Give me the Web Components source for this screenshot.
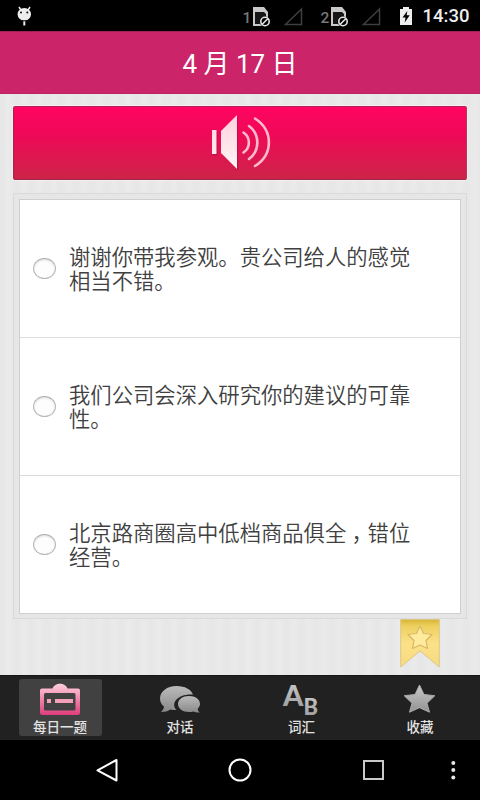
<!DOCTYPE html>
<html lang="zh-CN">
<head>
<meta charset="utf-8">
<title>每日一题</title>
<style>
html,body{margin:0;height:100%;background:#000}
body{font-family:Roboto,"Noto Sans CJK SC",sans-serif;overflow:hidden}
</style>
</head>
<body>
<daily-app></daily-app>
<script>
const define = (name, html) => customElements.define(name, class extends HTMLElement {
  constructor() {
    super();
    const t = document.createElement('template');
    t.innerHTML = html;
    this.attachShadow({mode: 'open'}).append(t.content.cloneNode(true));
  }
});

define('sim-slot', `
<style>
:host{display:flex;align-items:flex-start;width:61px;color:#777;font:500 15.500px/20px Roboto,sans-serif}
span{width:10px;padding-top:2px;height:20px}
svg{display:block}
</style>
<span><slot></slot></span>
<svg width="51" height="22" viewBox="0 0 51 22">
  <path d="M0 1h11l4 5v14H0z" fill="#c9c9c9"/>
  <path d="M2 6h9l2 2v10H2z" fill="#161616"/>
  <circle cx="12" cy="15.500" r="5.300" fill="#000"/>
  <circle cx="12" cy="15.500" r="4.200" fill="none" stroke="#e6e6e6" stroke-width="1.600"/>
  <path d="M9 18.500l6-6" stroke="#e6e6e6" stroke-width="1.600"/>
  <path d="M32.500 18.500h16V3z" fill="none" stroke="#3f3f3f" stroke-width="1.500"/>
</svg>`);

define('status-bar', `
<style>
:host{display:flex;height:31px;background:#000;color:#eee;box-sizing:border-box}
.bug{display:block;margin:5px 0 0 16px}
.right{margin-left:auto;display:flex;padding-right:11px}
sim-slot{margin-top:6px;margin-right:17px}
.bat{margin:7px 10px 0 0}
.time{font:500 18.500px/31px Roboto,sans-serif;padding-top:1px;width:46.500px}
</style>
<svg class="bug" width="17" height="22" viewBox="0 0 17 22">
  <path d="M3 2l2 3M14 2l-2 3" stroke="#eee" stroke-width="1.500"/>
  <ellipse cx="8.300" cy="9.300" rx="6.700" ry="6.300" fill="#eee"/>
  <path d="M8.300 14v6.500" stroke="#eee" stroke-width="2"/>
  <path d="M4.500 15.800h7.600" stroke="#000"/>
  <circle cx="5" cy="7.500" r="1" fill="#111"/><circle cx="11.300" cy="7.500" r="1" fill="#111"/>
</svg>
<div class="right">
  <sim-slot>1</sim-slot><sim-slot>2</sim-slot>
  <svg class="bat" width="14" height="20" viewBox="0 0 14 20">
    <path d="M4 0h6v2h3v16H1V2h3z" fill="#eee"/>
    <path d="M8.300 4L3.500 10.500h3l-.8 5 5-7.300h-3z" fill="#000"/>
  </svg>
  <div class="time">14:30</div>
</div>`);

define('title-bar', `
<style>
:host{display:flex;justify-content:center;height:63px;box-sizing:border-box;background:#cc2468;border-top:1px solid #a52057;border-bottom:1px solid #b8275f;color:#fff;font:400 26px/64px Roboto,"Noto Sans CJK SC",sans-serif}
</style><slot></slot>`);

define('sound-button', `
<style>
:host{display:flex;justify-content:center;height:74px;box-sizing:border-box;border:1.500px solid #a32750;border-color:#b2225b #b9345c #9c2948 #9b2850;border-radius:2px;background:linear-gradient(#ff0561,#f00858 35%,#cd2448);box-shadow:0 0 0 1px #f6eef0}
svg{display:block;margin-top:6px}
</style>
<svg width="62" height="60" viewBox="209 113 62 60">
  <defs><linearGradient id="g" x1="0" y1="0" x2="0" y2="1"><stop offset="0" stop-color="#ffd0de"/><stop offset="1" stop-color="#fff5f6"/></linearGradient></defs>
  <g transform="translate(1 1.500)" fill="#a60e40" opacity=".6"><path d="M212 130h4.500v24H212zM221 131l16-16v54l-16-16z"/></g>
  <path d="M212 130h4.500v24H212zM221 131l16-16v54l-16-16z" fill="url(#g)"/>
  <g fill="none" stroke="#ffb9ca" stroke-width="2.600" stroke-linecap="round"><path d="M243.500 132.500a12 12 0 0 1 0 20M249 126a20.500 20.500 0 0 1 0 33M255 118.500c18.500 12 18.500 36 0 47.500"/></g>
</svg>`);

define('answer-option', `
<style>
:host{display:flex;align-items:center;height:138px;box-sizing:border-box;border-bottom:1px solid #dcdcdc;padding:0 0 0 13px;color:#404040}
:host(:last-child){border-bottom:0;height:137px}
i{flex:none;width:23px;height:21px;box-sizing:border-box;border:1.800px solid #b9b9b9;border-top-color:#adadad;border-radius:50%;background:#fdfdfd;box-shadow:inset 0 1px 2px #ddd}
p{margin:0 0 0 13px;width:345px;font:400 21.330px/24px "Noto Sans CJK SC",sans-serif;font-weight:350;padding-bottom:1px}
</style><i></i><p><slot></slot></p>`);

define('option-card', `
<style>
:host{display:block;box-sizing:border-box;height:426px;width:454px;border:1px solid #dadada;padding:5px 5px 4px;background:#e6e6e6}
div{border:1px solid #cfcfcf;background:#fff;height:413px}
</style><div><slot></slot></div>`);

define('book-mark', `
<style>:host{display:block;width:40px;height:50px}svg{display:block}</style>
<svg width="40" height="50" viewBox="0 0 40 50">
  <defs><linearGradient id="g" x1="0" y1="0" x2="0" y2="1"><stop offset="0" stop-color="#d9b432"/><stop offset=".13" stop-color="#edcf5e"/><stop offset=".5" stop-color="#fbe188"/><stop offset="1" stop-color="#f6da80"/></linearGradient></defs>
  <path d="M.7.500h38.600V48L20 32 .7 48z" fill="url(#g)" stroke="#dcc78b" stroke-width="1"/>
  <path d="M20 7l3.500 7.500 8.500 1-6 6 1.500 8L20 26l-7.500 3.500 1.500-8-6-6 8.500-1z" fill="#ffeb9d" stroke="#d9b865" stroke-width="1.200" stroke-linejoin="round"/>
</svg>`);

define('tab-item', `
<style>
:host{display:flex;justify-content:center;width:120px;padding-top:3px;box-sizing:border-box}
div{width:83px;height:57px;border-radius:3px;display:flex;flex-direction:column;align-items:center;color:#e3e3e3;font:500 13.500px/18px "Noto Sans CJK SC",sans-serif}
:host([selected]) div{background:#414141}
.icon{height:38px;display:block}
</style>
<div><span class="icon"><slot name="icon"></slot></span><slot></slot></div>`);

define('tab-icon-card', `<style>:host,svg{display:block}</style>
<svg width="42" height="38" viewBox="0 0 42 38">
<defs><linearGradient id="g" x1="0" y1="0" x2="0" y2="1"><stop offset="0" stop-color="#ffd0dd"/><stop offset="1" stop-color="#df3d7b"/></linearGradient></defs>
<path fill-rule="evenodd" fill="url(#g)" d="M3 9.500h10.500c2-6.500 13-6.500 15 0H39q2 0 2 2v22.500q0 2-2 2H3q-2 0-2-2V11.500q0-2 2-2zm3.500 4.500q-1.500 0-1.500 1.500V30q0 1.500 1.500 1.500h28.500q1.500 0 1.500-1.500V15.500q0-1.500-1.500-1.500z"/>
<path fill="#f3a0b8" d="M8 20h4v4H8zM16 20h18v4H16z"/></svg>`);

define('tab-icon-chat', `<style>:host,svg{display:block}</style>
<svg width="42" height="38" viewBox="0 0 42 38">
<defs><linearGradient id="g" x1="0" y1="0" x2="0" y2="1"><stop offset="0" stop-color="#bbb"/><stop offset="1" stop-color="#898989"/></linearGradient></defs>
<path fill="url(#g)" d="M17.500 7C8 7 1 12.500 1 19.500c0 3.500 1.500 6 4 8 0 2-1.500 4-3 5.500 4 0 7-.8 9.500-2.500 2 .5 4 .7 6 .5C11 24 19 14.500 34 15.500 32 10.500 26 7 17.500 7z"/>
<path fill="url(#g)" d="M30 17c-6.500 0-11 3.300-11 8s4.500 8 11 8c1.500 0 3-.2 4.300-.6 2 1 4 1.300 6.500 1-1.500-1-2-2.300-2-4 1.500-1.200 2.200-2.800 2.200-4.400 0-4.700-4.500-8-11-8z"/></svg>`);

define('tab-icon-words', `<style>:host,svg{display:block}svg{overflow:visible}</style>
<svg width="42" height="38" viewBox="0 0 42 38">
<defs><linearGradient id="g" x1="0" y1="0" x2="0" y2="1"><stop offset="0" stop-color="#d0d0d0"/><stop offset="1" stop-color="#999"/></linearGradient></defs>
<g fill="url(#g)" font-family="Lato" font-weight="900"><text x="2" y="27" font-size="29">A</text><text x="22.500" y="36" font-size="23" textLength="14.500" lengthAdjust="spacingAndGlyphs">B</text></g></svg>`);

define('tab-icon-star', `<style>:host,svg{display:block}</style>
<svg width="42" height="38" viewBox="0 0 42 38">
<defs><linearGradient id="g" x1="0" y1="0" x2="0" y2="1"><stop offset="0" stop-color="#c8c8c8"/><stop offset="1" stop-color="#929292"/></linearGradient></defs>
<path fill="url(#g)" stroke="#aaa" stroke-linejoin="round" d="M20.500 6l4.500 9.500 10.800 1.200-7.800 7.500 2.500 9-10-4.500-10 4.500 2.500-9-7.800-7.500L16 15.500z"/></svg>`);

define('tab-bar', `
<style>:host{display:flex;height:65px;box-sizing:border-box;background:#212121;border-top:1px solid #151515}</style><slot></slot>`);

define('system-nav', `
<style>:host{display:block;height:60px;background:#000}svg{display:block}</style>
<svg width="480" height="60" viewBox="0 740 480 60" fill="none" stroke="#fff" stroke-width="2">
<path d="M116.500 760v20.500L97.500 770.300z" stroke-linejoin="round"/>
<circle cx="240" cy="770" r="10.500"/>
<path d="M364 761h19v18h-19z" stroke="#c9c9c9"/>
<g fill="#e6e6e6" stroke="none"><circle cx="453.300" cy="763" r="2"/><circle cx="453.300" cy="770" r="2"/><circle cx="453.300" cy="777.500" r="2"/></g></svg>`);

define('daily-app', `
<style>
:host{display:flex;flex-direction:column;width:480px;height:800px}
main{flex:1;display:flex;flex-direction:column;padding:12px 13px 0;background:repeating-linear-gradient(90deg,#e7e7e7 0 3px,#eaeaea 8px 10px,#e7e7e7 15px)}
option-card{margin-top:13px}
book-mark{align-self:flex-end;margin-right:27px}
.c{font-feature-settings:"halt";padding:0 .25em}
.w{padding-left:3px}
</style>
<status-bar></status-bar>
<title-bar>4 月 17 日</title-bar>
<main>
  <sound-button></sound-button>
  <option-card>
    <answer-option>谢谢你带我参观。贵公司给人的感觉相当不错。</answer-option>
    <answer-option>我们公司会深入研究你的建议的可靠性。</answer-option>
    <answer-option>北京路商圈高中低档商品俱全<span class="c">，</span>错位经营。</answer-option>
  </option-card>
  <book-mark></book-mark>
</main>
<tab-bar>
  <tab-item selected><tab-icon-card slot="icon"></tab-icon-card>每日一题</tab-item>
  <tab-item><tab-icon-chat slot="icon"></tab-icon-chat>对话</tab-item>
  <tab-item class="w"><tab-icon-words slot="icon"></tab-icon-words>词汇</tab-item>
  <tab-item><tab-icon-star slot="icon"></tab-icon-star>收藏</tab-item>
</tab-bar>
<system-nav></system-nav>`);
</script>
</body>
</html>
